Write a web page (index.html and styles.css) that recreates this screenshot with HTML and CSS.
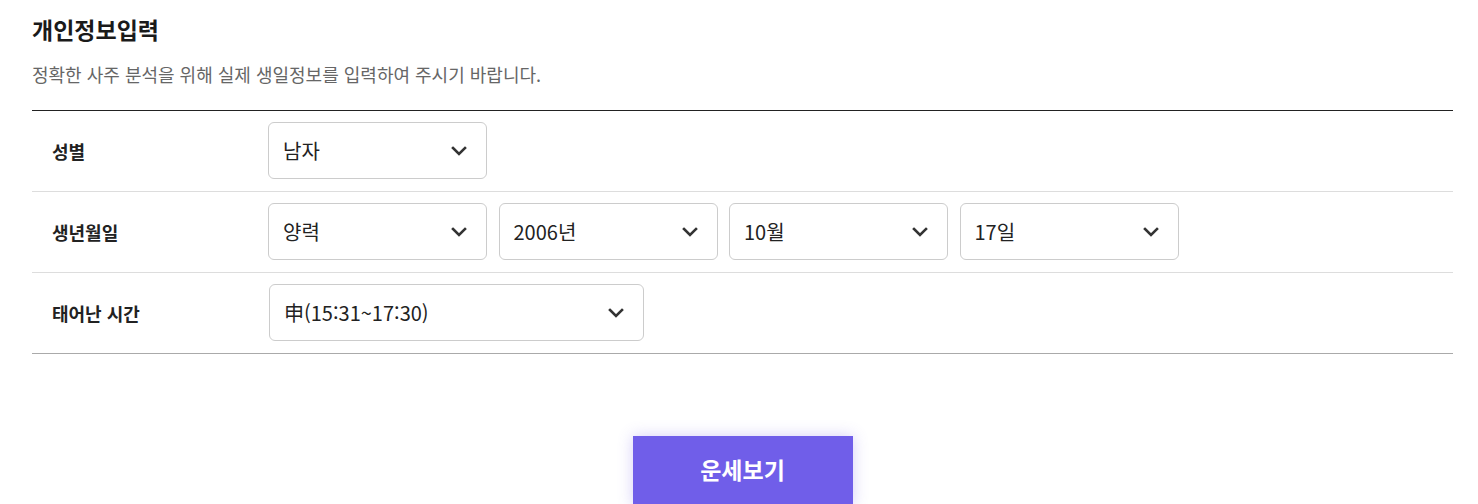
FILE: index.html
```html
<!DOCTYPE html>
<html lang="ko">
<head>
<meta charset="utf-8">
<title>개인정보입력</title>
<link rel="stylesheet" href="styles.css">
</head>
<body>
<div class="wrap">
  <h2 class="title">개인정보입력</h2>
  <p class="desc">정확한 사주 분석을 위해 실제 생일정보를 입력하여 주시기 바랍니다.</p>
  <div class="table">
    <div class="row">
      <div class="label">성별</div>
      <div class="fields">
        <div class="select"><span>남자</span><svg class="chev" viewBox="0 0 16 10" width="16" height="10"><path d="M2 2 L8 8 L14 2" fill="none" stroke="#333" stroke-width="2.6" stroke-linecap="square"/></svg></div>
      </div>
    </div>
    <div class="row">
      <div class="label">생년월일</div>
      <div class="fields">
        <div class="select"><span>양력</span><svg class="chev" viewBox="0 0 16 10" width="16" height="10"><path d="M2 2 L8 8 L14 2" fill="none" stroke="#333" stroke-width="2.6" stroke-linecap="square"/></svg></div>
        <div class="select"><span>2006년</span><svg class="chev" viewBox="0 0 16 10" width="16" height="10"><path d="M2 2 L8 8 L14 2" fill="none" stroke="#333" stroke-width="2.6" stroke-linecap="square"/></svg></div>
        <div class="select"><span>10월</span><svg class="chev" viewBox="0 0 16 10" width="16" height="10"><path d="M2 2 L8 8 L14 2" fill="none" stroke="#333" stroke-width="2.6" stroke-linecap="square"/></svg></div>
        <div class="select"><span>17일</span><svg class="chev" viewBox="0 0 16 10" width="16" height="10"><path d="M2 2 L8 8 L14 2" fill="none" stroke="#333" stroke-width="2.6" stroke-linecap="square"/></svg></div>
      </div>
    </div>
    <div class="row row-last">
      <div class="label">태어난 시간</div>
      <div class="fields fields-time">
        <div class="select select-wide"><span>申(15:31~17:30)</span><svg class="chev" viewBox="0 0 16 10" width="16" height="10"><path d="M2 2 L8 8 L14 2" fill="none" stroke="#333" stroke-width="2.6" stroke-linecap="square"/></svg></div>
      </div>
    </div>
  </div>
  <div class="actions">
    <button class="btn" type="button">운세보기</button>
  </div>
</div>
</body>
</html>
```
FILE: styles.css
```css
* { box-sizing: border-box; }
html, body {
  margin: 0;
  padding: 0;
  background: #fff;
}
body {
  font-family: "Noto Sans CJK KR", "Noto Sans", sans-serif;
  color: #222;
}
.wrap {
  width: 1421px;
  margin-left: 32px;
  padding-top: 14px;
}
.title {
  margin: 0;
  font-size: 23px;
  font-weight: 700;
  line-height: 30px;
  color: #1a1a1a;
}
.desc {
  margin: 17px 0 0 0;
  font-size: 18px;
  line-height: 26px;
  color: #666;
}
.table {
  margin-top: 23px;
  border-top: 1px solid #222;
  border-bottom: 1px solid #aaa;
}
.row {
  display: flex;
  align-items: center;
  height: 81px;
  padding-bottom: 1px;
  border-bottom: 1px solid #ddd;
}
.row-last {
  height: 80px;
  border-bottom: none;
}
.label {
  width: 236px;
  padding-left: 20px;
  font-size: 18px;
  font-weight: 700;
  color: #222;
}
.fields {
  display: flex;
  gap: 11.5px;
}
.fields-time {
  padding-left: 1px;
}
.select {
  display: flex;
  align-items: center;
  justify-content: space-between;
  width: 219px;
  height: 57px;
  padding: 0 19px 0 14px;
  border: 1px solid #ccc;
  border-radius: 6px;
  background: #fff;
  font-size: 20px;
  color: #222;
}
.select-wide {
  width: 375px;
}
.chev {
  display: block;
}
.actions {
  display: flex;
  justify-content: center;
  padding-top: 82px;
}
.btn {
  width: 220px;
  height: 70px;
  border: none;
  background: #705ee9;
  color: #fff;
  font-family: "Noto Sans CJK KR", "Noto Sans", sans-serif;
  font-size: 23px;
  font-weight: 700;
  box-shadow: 0 0 14px rgba(112, 94, 233, 0.3);
  padding: 0 0 4px 0;
}
```
